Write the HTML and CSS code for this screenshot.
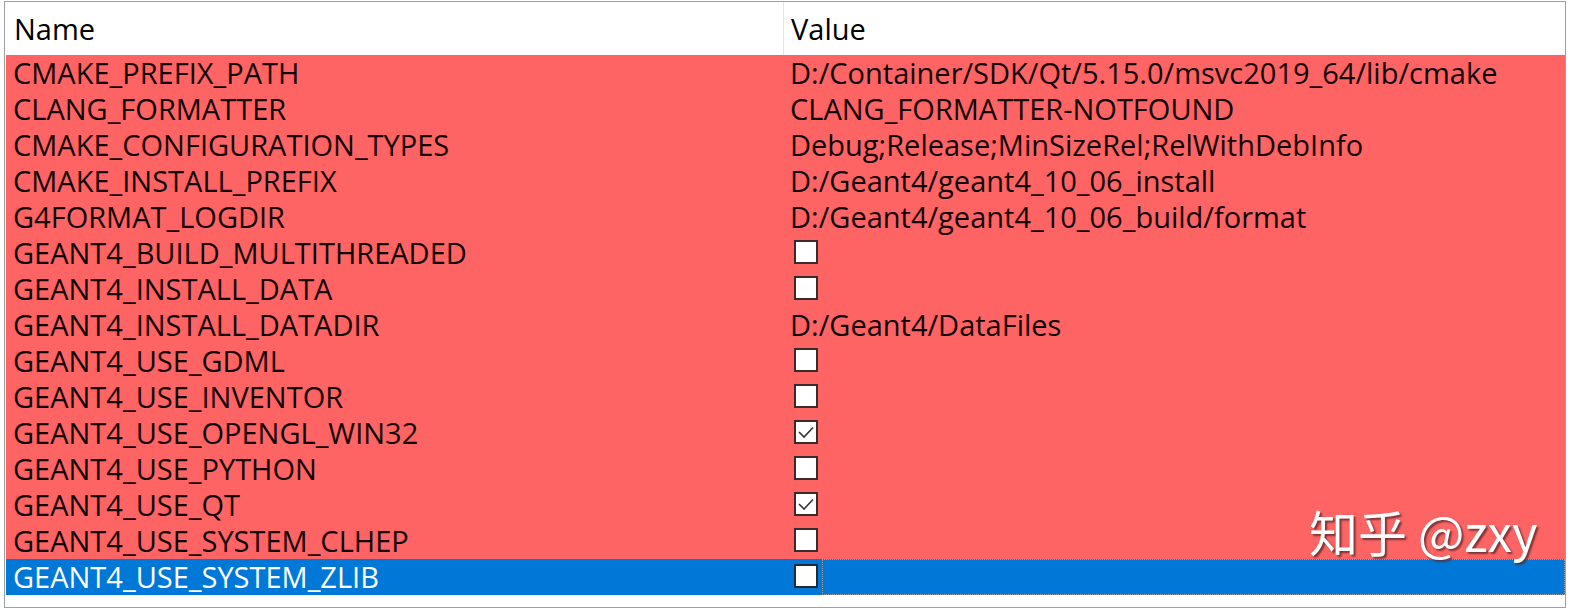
FILE: index.html
```html
<!DOCTYPE html>
<html>
<head>
<meta charset="utf-8">
<link rel="stylesheet" href="styles.css">
</head>
<body>
<div class="frame">
  <div class="header">
    <div class="hcell name">Name</div>
    <div class="hcell value">Value</div>
  </div>
  <div class="rows">
    <div class="row"><div class="cell name">CMAKE_PREFIX_PATH</div><div class="cell value">D:/Container/SDK/Qt/5.15.0/msvc2019_64/lib/cmake</div></div>
    <div class="row"><div class="cell name">CLANG_FORMATTER</div><div class="cell value">CLANG_FORMATTER-NOTFOUND</div></div>
    <div class="row"><div class="cell name">CMAKE_CONFIGURATION_TYPES</div><div class="cell value">Debug;Release;MinSizeRel;RelWithDebInfo</div></div>
    <div class="row"><div class="cell name">CMAKE_INSTALL_PREFIX</div><div class="cell value">D:/Geant4/geant4_10_06_install</div></div>
    <div class="row"><div class="cell name">G4FORMAT_LOGDIR</div><div class="cell value">D:/Geant4/geant4_10_06_build/format</div></div>
    <div class="row"><div class="cell name">GEANT4_BUILD_MULTITHREADED</div><div class="cell value"><span class="cb"></span></div></div>
    <div class="row"><div class="cell name">GEANT4_INSTALL_DATA</div><div class="cell value"><span class="cb"></span></div></div>
    <div class="row"><div class="cell name">GEANT4_INSTALL_DATADIR</div><div class="cell value">D:/Geant4/DataFiles</div></div>
    <div class="row"><div class="cell name">GEANT4_USE_GDML</div><div class="cell value"><span class="cb"></span></div></div>
    <div class="row"><div class="cell name">GEANT4_USE_INVENTOR</div><div class="cell value"><span class="cb"></span></div></div>
    <div class="row"><div class="cell name">GEANT4_USE_OPENGL_WIN32</div><div class="cell value"><span class="cb"><svg viewBox="0 0 20 20" width="20" height="20"><path d="M3 10 L8 15 L17 5.5" fill="none" stroke="#333" stroke-width="1.6"/></svg></span></div></div>
    <div class="row"><div class="cell name">GEANT4_USE_PYTHON</div><div class="cell value"><span class="cb"></span></div></div>
    <div class="row"><div class="cell name">GEANT4_USE_QT</div><div class="cell value"><span class="cb"><svg viewBox="0 0 20 20" width="20" height="20"><path d="M3 10 L8 15 L17 5.5" fill="none" stroke="#333" stroke-width="1.6"/></svg></span></div></div>
    <div class="row"><div class="cell name">GEANT4_USE_SYSTEM_CLHEP</div><div class="cell value"><span class="cb"></span></div></div>
    <div class="row selected"><div class="cell name">GEANT4_USE_SYSTEM_ZLIB</div><div class="cell value"><span class="cb"></span><span class="focus"></span></div></div>
  </div>
  <div class="watermark">知乎 @zxy</div>
</div>
</body>
</html>
```

FILE: styles.css
```css
html, body {
  margin: 0;
  padding: 0;
  background: #ffffff;
}
body {
  font-family: "Open Sans", "Noto Sans", "Noto Sans CJK SC", sans-serif;
  font-size: 29px;
  color: #000;
}
.frame {
  position: relative;
  margin: 1px 0 0 4px;
  width: 1559px;
  height: 605px;
  border: 1px solid #a0a0a0;
  padding-left: 1px;
  box-sizing: content-box;
  overflow: hidden;
}
.header {
  display: flex;
  height: 53px;
  align-items: stretch;
}
.hcell {
  display: flex;
  align-items: center;
}
.hcell.name {
  width: 769px;
  padding-left: 8px;
  border-right: 1px solid #e5e5e5;
}
.hcell.value {
  padding-left: 7px;
}
.rows {
  display: flex;
  flex-direction: column;
}
.row {
  display: flex;
  height: 36px;
  background: #ff6464;
  color: #100000;
}
.cell {
  display: flex;
  align-items: center;
  white-space: nowrap;
  padding-bottom: 2px;
  box-sizing: border-box;
}
.cell.name {
  width: 778px;
  padding-left: 7px;
}
.cell.value {
  flex: 1;
  padding-left: 6px;
  position: relative;
}
.cb {
  display: inline-flex;
  align-items: center;
  justify-content: center;
  width: 20px;
  height: 20px;
  border: 2px solid #3a2a2a;
  background: #fff;
  margin-left: 4px;
}
.selected {
  background: #0078d7;
  color: #fff;
}
.selected .cb {
  border-color: #1c2a3a;
}
.focus {
  position: absolute;
  left: 38px;
  top: 0;
  right: 0;
  bottom: 0;
  border: 1px dotted #9aa3ad;
}
.watermark {
  position: absolute;
  left: 1304px;
  top: 493px;
  font-family: "Noto Sans CJK SC", "Noto Sans", sans-serif;
  font-size: 49px;
  color: #fff;
  text-shadow: 2px 2px 2px rgba(90, 40, 40, 0.8);
  white-space: nowrap;
}
```
